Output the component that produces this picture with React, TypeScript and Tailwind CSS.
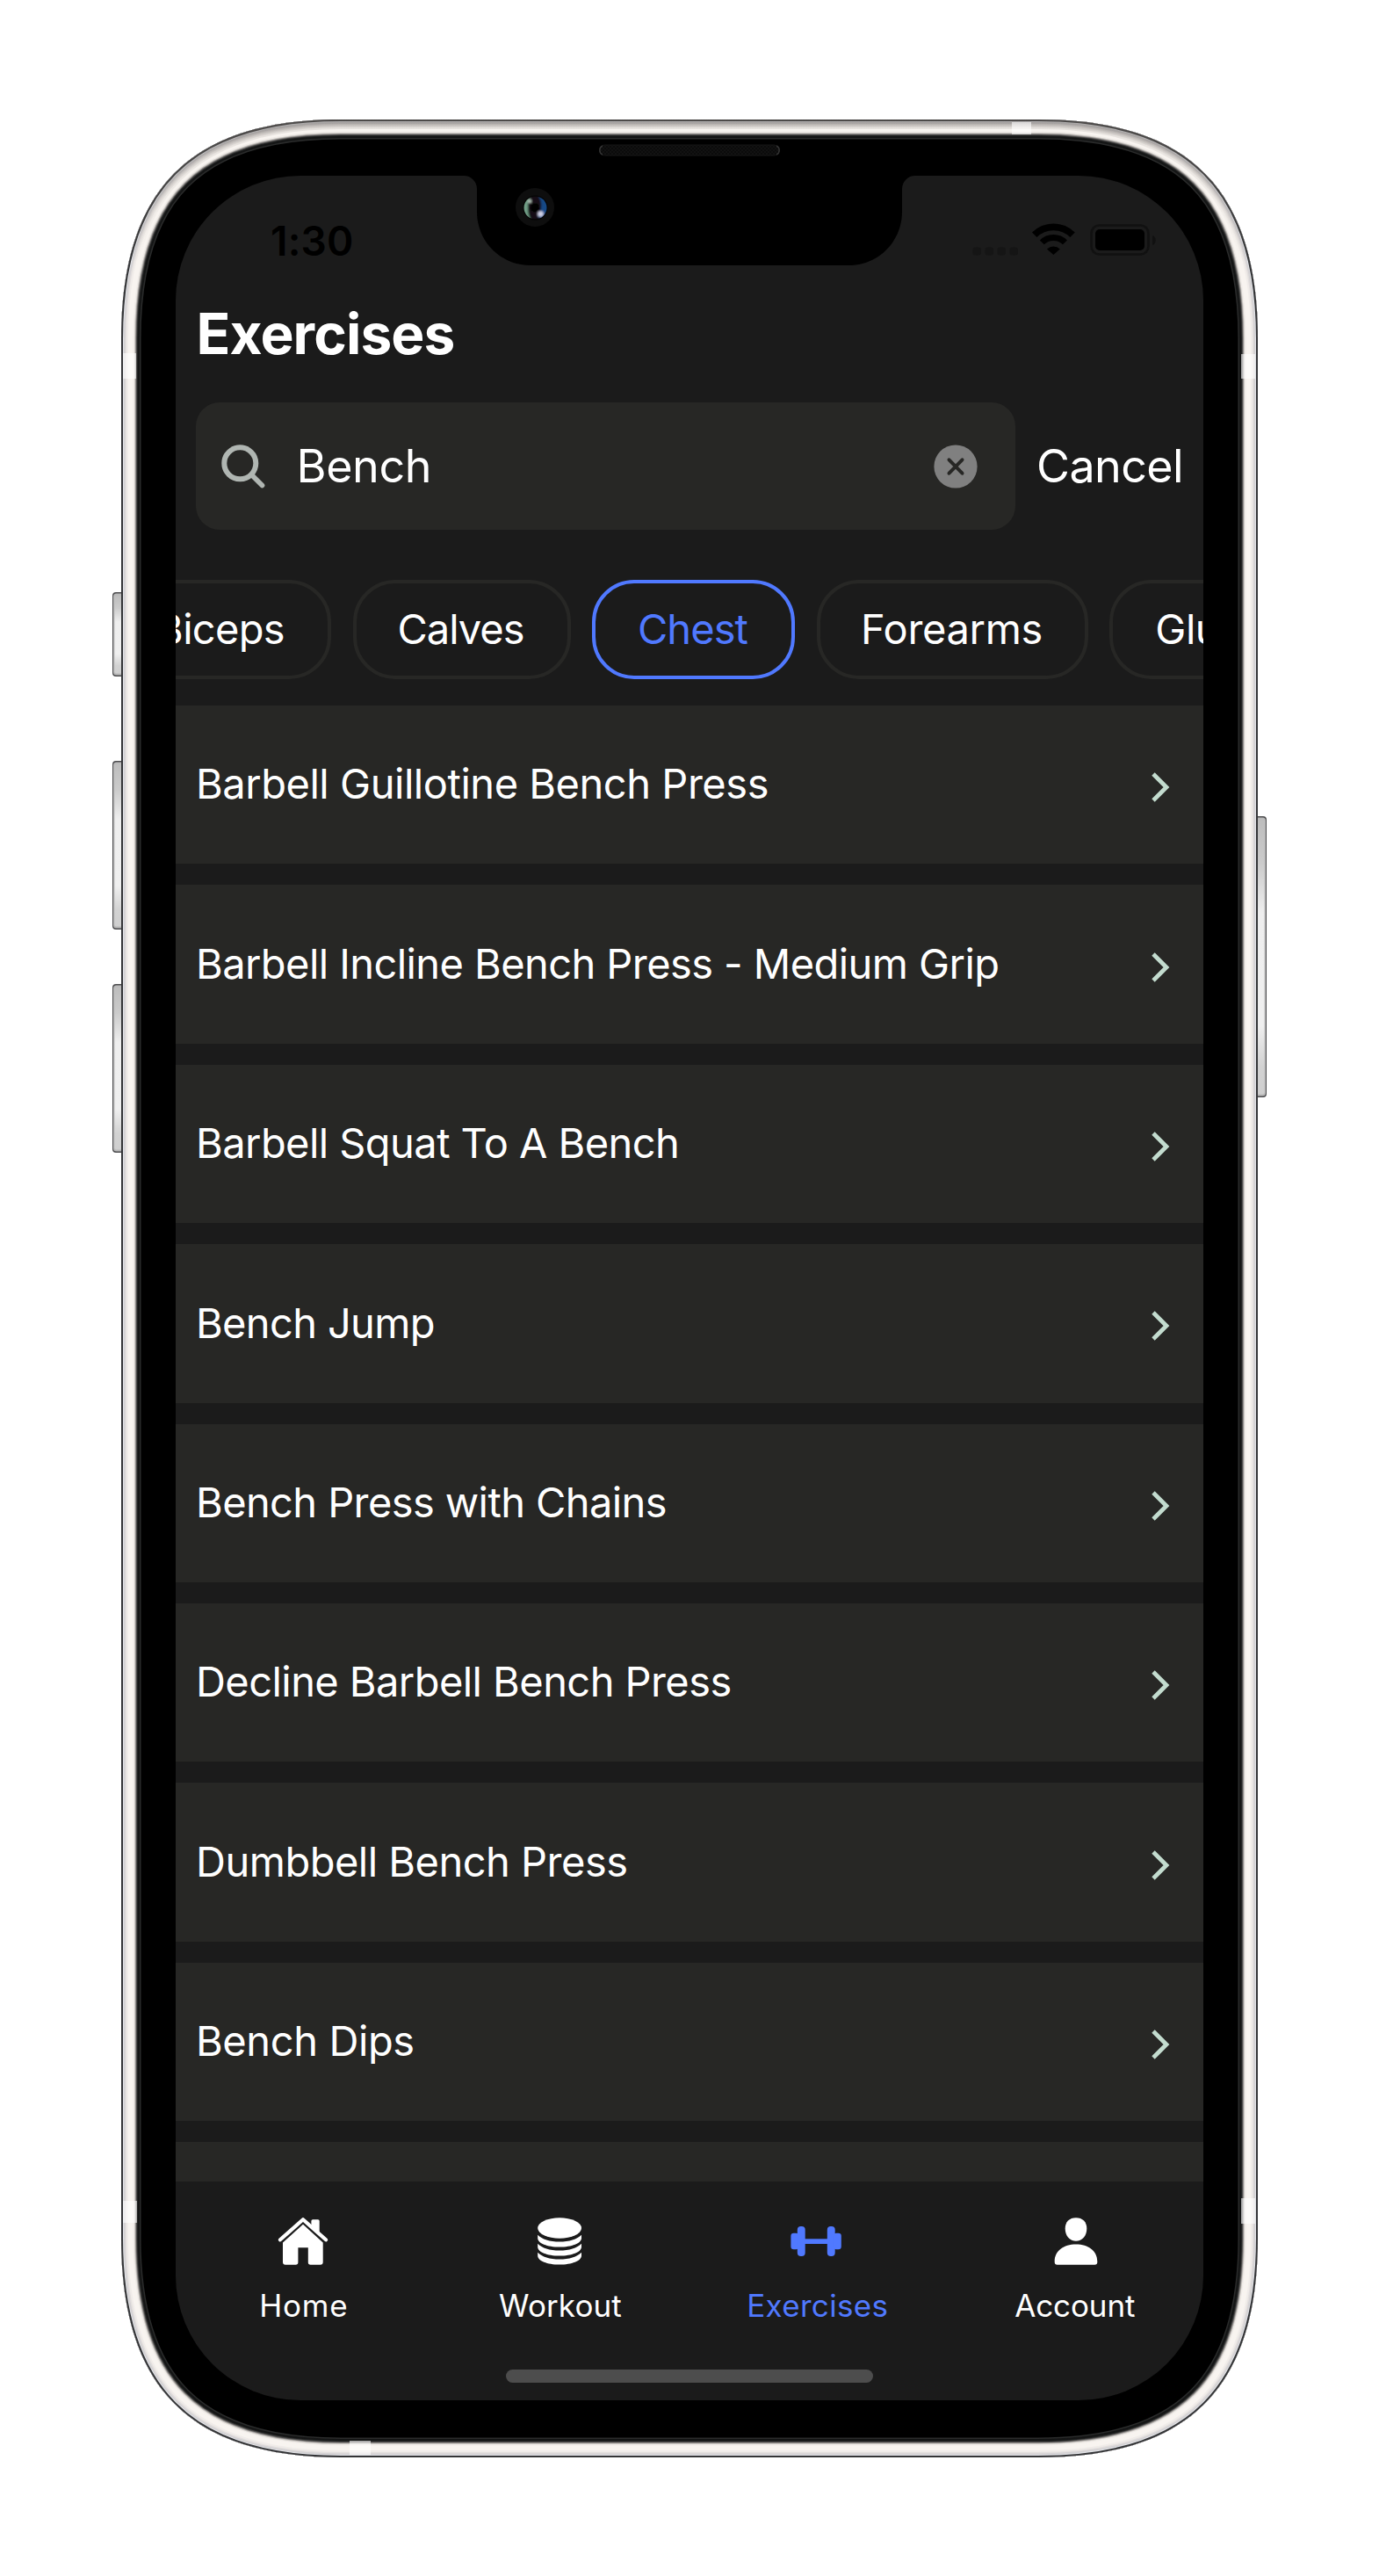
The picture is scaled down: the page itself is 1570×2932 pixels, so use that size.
import React from "react";

const BODY =
  "M388 136H1182C1353 136 1432 215 1432 386V2547C1432 2718 1353 2797 1182 2797H388C217 2797 138 2718 138 2547V386C138 215 217 136 388 136Z";

/* [depth from the outer edge, colour], deepest first */
const RIM: [number, string][] = [
  [22.5, "#2a2b2b"],
  [21, "#141515"],
  [19, "#222323"],
  [18, "#4e4d4c"],
  [17, "#8f8c8a"],
  [16, "#cbc7c3"],
  [15, "#f0ece8"],
  [13.5, "#f8f4f0"],
  [8, "#f0ece9"],
  [6, "#e3dfde"],
  [4.5, "#d3d1d3"],
  [3, "#e3e4e8"],
  [2, "#343537"],
];

/* extra shade on the upper part of the rim */
const SHADE = [11, 9, 7, 5];

function SideButton({ x, y, h, right }: { x: number; y: number; h: number; right?: boolean }) {
  return (
    <g>
      <rect x={right ? x - 8 : x} y={y} width="18" height={h} rx="4" fill="#4c4c4e" />
      <rect x={right ? x - 8 : x + 1} y={y + 1.5} width="17" height={h - 3} rx="3.5" fill="#b9b9b9" />
      <rect x={right ? x - 8 : x + 2.5} y={y + 3.5} width="15.5" height={h - 7} rx="2" fill="url(#btn)" />
    </g>
  );
}

function DeviceFrame() {
  return (
    <svg className="absolute inset-0" width="1570" height="2932" viewBox="0 0 1570 2932">
      <defs>
        <clipPath id="bodyClip">
          <path d={BODY} />
        </clipPath>
        <linearGradient id="btn" x1="0" y1="0" x2="0" y2="1">
          <stop offset="0" stopColor="#bdbdbd" />
          <stop offset="0.16" stopColor="#cbcbcb" />
          <stop offset="0.34" stopColor="#eeeeee" />
          <stop offset="0.75" stopColor="#efefef" />
          <stop offset="0.9" stopColor="#d2d2d2" />
          <stop offset="1" stopColor="#cfcfcf" />
        </linearGradient>
        <linearGradient id="shade" gradientUnits="userSpaceOnUse" x1="0" y1="136" x2="0" y2="300">
          <stop offset="0" stopColor="#6b6560" stopOpacity="0.14" />
          <stop offset="1" stopColor="#6b6560" stopOpacity="0" />
        </linearGradient>
      </defs>
      <SideButton x={128} y={674} h={96} />
      <SideButton x={128} y={866} h={192} />
      <SideButton x={128} y={1120} h={192} />
      <SideButton x={1432} y={929} h={320} right />
      <g clipPath="url(#bodyClip)">
        <path d={BODY} fill="#000" />
        {RIM.map(([d, c]) => (
          <path key={d} d={BODY} fill="none" stroke={c} strokeWidth={d * 2} />
        ))}
        {SHADE.map((d) => (
          <path key={d} d={BODY} fill="none" stroke="url(#shade)" strokeWidth={d * 2} />
        ))}
        <g fill="#fff" fillOpacity="0.6">
          <rect x="1152" y="139" width="22" height="14" />
          <rect x="140" y="402" width="15" height="29" />
          <rect x="1413" y="403" width="16" height="28" />
          <rect x="398" y="2778" width="24" height="16" />
          <rect x="140" y="2505" width="16" height="25" />
          <rect x="1413" y="2502" width="16" height="29" />
        </g>
      </g>
    </svg>
  );
}

function Notch() {
  return (
    <svg className="absolute left-[500px] top-[158px]" width="570" height="150" viewBox="500 158 570 150">
      <defs>
        <pattern id="mesh" width="4" height="4" patternUnits="userSpaceOnUse">
          <rect width="4" height="4" fill="#121212" />
          <rect width="2" height="2" fill="#0b0b0b" />
          <rect x="2" y="2" width="2" height="2" fill="#0b0b0b" />
        </pattern>
        <clipPath id="lens">
          <ellipse cx="609.5" cy="236.5" rx="13" ry="13" />
        </clipPath>
        <filter id="soft">
          <feGaussianBlur stdDeviation="1" />
        </filter>
      </defs>
      <path d="M528 199V200A15 15 0 0 1 543 215V241C543 275 570 302 604 302H966C1000 302 1027 275 1027 241V215A15 15 0 0 1 1042 200V199Z" fill="#000" />
      <rect x="682.5" y="165" width="204.500" height="12" rx="6" fill="url(#mesh)" stroke="#171717" />
      <path d="M686 166a5.500 5.500 0 0 0 0 10M884 166a5.500 5.500 0 0 1 0 10" fill="none" stroke="#333" strokeWidth="1.5" />
      <circle cx="609" cy="236" r="22" fill="#0e0e0e" />
      <circle cx="609.500" cy="236.500" r="14" fill="#040404" />
      <g clipPath="url(#lens)" filter="url(#soft)">
        <rect x="596" y="223" width="27" height="27" fill="#121012" />
        <path d="M604 222C600 230 600 242 604 250L594 250V222Z" fill="#6f9d85" />
        <path d="M613 223C618 230 617 240 612 246L617 250L625 240V226Z" fill="#174a86" />
        <circle cx="609" cy="236.500" r="5" fill="#050505" />
        <circle cx="603" cy="229" r="2.300" fill="#a9b8af" />
        <circle cx="615.500" cy="243.500" r="3.300" fill="#cfd0e6" />
      </g>
    </svg>
  );
}

function StatusBar() {
  return (
    <div className="flex h-[147px] shrink-0 items-start justify-between pl-[108px] pr-[54px] pt-[54px]">
      <span className="text-[46px] font-semibold leading-[40px] tracking-[0.2px] text-black">1:30</span>
      <svg width="209" height="40" viewBox="0 0 209 40">
        <g fill="#151515">
          <rect x="0.500" y="27.500" width="9.500" height="9" rx="3" />
          <rect x="14.500" y="27.500" width="9.500" height="9" rx="3" />
          <rect x="28.500" y="27.500" width="9.500" height="9" rx="3" />
          <rect x="42.500" y="27.500" width="9.500" height="9" rx="3" />
        </g>
        <g fill="none" stroke="#000">
          <path d="M70.700 13.300A30.700 30.700 0 0 1 114.100 13.300" strokeWidth="7.700" />
          <path d="M79.300 21.900A18.500 18.500 0 0 1 105.500 21.900" strokeWidth="7" />
        </g>
        <path d="M92.400 36L85 29.500A10.500 10.500 0 0 1 99.800 29.500Z" />
        <rect x="135.500" y="2.500" width="65" height="33" rx="9" fill="none" stroke="#111" strokeWidth="2.600" />
        <rect x="140" y="7" width="56" height="24" rx="5" fill="#000" />
        <path d="M205 14C210 15.500 210 23.500 205 25Z" fill="#111" />
      </svg>
    </div>
  );
}

function SearchRow() {
  return (
    <div className="mt-[45px] flex h-[145px] shrink-0 items-center pl-[23px]">
      <div className="flex h-full w-[932.5px] items-center rounded-[27px] bg-[#272725] pl-[29px] pr-[43px]">
        <svg width="50" height="50" viewBox="0 0 50 50" fill="none" stroke="#b0b6b2" strokeLinecap="round">
          <circle cx="21.300" cy="21.300" r="18" strokeWidth="6" />
          <path d="M34.500 34.500L46.500 46.500" strokeWidth="5.600" />
        </svg>
        <span className="ml-[35.5px] flex-1 text-[52px] leading-[60px] tracking-[-0.36px] text-white">Bench</span>
        <svg width="50" height="50" viewBox="0 0 50 50">
          <circle cx="25" cy="25" r="24.600" fill="#808080" />
          <path d="M17.500 17.300L32.500 32.700M32.500 17.300L17.500 32.700" stroke="#272725" strokeWidth="4" strokeLinecap="round" />
        </svg>
      </div>
      <span className="ml-[24.5px] text-[52px] leading-[60px] tracking-[-0.58px] text-white">Cancel</span>
    </div>
  );
}

const muscles = [
  { label: "Biceps", size: "w-[254px] border-[#272725] text-white tracking-[-0.7px] pl-[2px]" },
  { label: "Calves", size: "w-[248px] border-[#272725] text-white tracking-[-1px] pr-[2px]" },
  { label: "Chest", size: "w-[231px] border-[#5079ff] text-[#5079ff] tracking-[-0.9px] pr-[2px]" },
  { label: "Forearms", size: "w-[309px] border-[#272725] text-white tracking-[-0.35px] pr-[1px]" },
  { label: "Glutes", size: "w-[243px] border-[#272725] text-white tracking-[-0.5px]" },
];

function MuscleFilter() {
  return (
    <div className="ml-[-77px] mt-[57px] flex h-[113px] shrink-0 gap-[24.5px]">
      {muscles.map((m) => (
        <div
          key={m.label}
          className={`flex shrink-0 items-center justify-center rounded-[48px] border-4 pb-[2px] text-[47px] leading-[56px] ${m.size}`}
        >
          {m.label}
        </div>
      ))}
    </div>
  );
}

const exercises = [
  { name: "Barbell Guillotine Bench Press", spacing: "tracking-[-0.46px]" },
  { name: "Barbell Incline Bench Press - Medium Grip", spacing: "tracking-[-0.57px]" },
  { name: "Barbell Squat To A Bench", spacing: "tracking-[-0.56px]" },
  { name: "Bench Jump", spacing: "tracking-[-0.65px]" },
  { name: "Bench Press with Chains", spacing: "tracking-[-0.6px]" },
  { name: "Decline Barbell Bench Press", spacing: "tracking-[-0.56px]" },
  { name: "Dumbbell Bench Press", spacing: "tracking-[-0.5px]" },
  { name: "Bench Dips", spacing: "tracking-[-0.4px]" },
];

function ExerciseList() {
  return (
    <div className="mt-[30px] flex h-[1680px] shrink-0 flex-col gap-[24px] overflow-hidden">
      {exercises.map((e) => (
        <div key={e.name} className="flex h-[180.4px] shrink-0 items-center justify-between bg-[#272725] pl-[23px] pr-[38px]">
          <span className={`pb-[1.5px] text-[47px] leading-[56px] text-white ${e.spacing}`}>{e.name}</span>
          <svg className="mt-[6px]" width="22" height="36" viewBox="0 0 22 36" fill="none" stroke="#c3dccf" strokeWidth="4.800">
            <path d="M3 3L18 18L3 33" />
          </svg>
        </div>
      ))}
      <div className="h-[180.4px] shrink-0 bg-[#272725]" />
    </div>
  );
}

function HomeIcon() {
  return (
    <svg width="60" height="56" viewBox="0 0 60 56" fill="currentColor">
      <path d="M3 26.300L29 3.300L55 26.300" fill="none" stroke="currentColor" strokeWidth="4.200" strokeLinecap="round" strokeLinejoin="round" />
      <path d="M38.400 10V5A1.700 1.700 0 0 1 40.100 3.300H46A1.700 1.700 0 0 1 47.700 5V19.500Z" />
      <path d="M29 8.800L51.700 29.500V51.700A3 3 0 0 1 48.700 54.700H37.500A2.700 2.700 0 0 1 34.800 52V35.300H23.400V52A2.700 2.700 0 0 1 20.700 54.700H9A3 3 0 0 1 6 51.700V29.500Z" />
    </svg>
  );
}

function StackIcon() {
  const band = "M3.200 20.700C8 25.700 17 28.600 28 28.600S48 25.700 53 20.700V24.500C53 30.300 42 34.600 28 34.600S3.200 30.300 3.200 24.500Z";
  return (
    <svg width="60" height="56" viewBox="0 0 60 56" fill="currentColor">
      <ellipse cx="28.100" cy="13" rx="24.900" ry="11.700" />
      <path d={band} />
      <path d={band} transform="translate(0 10)" />
      <path d={band} transform="translate(0 20)" />
    </svg>
  );
}

function DumbbellIcon() {
  return (
    <svg width="60" height="56" viewBox="0 0 60 56" fill="currentColor" overflow="visible">
      <rect x="-0.600" y="18.700" width="9" height="18.500" rx="3.300" />
      <rect x="6.800" y="11" width="8.900" height="34" rx="4" />
      <rect x="14" y="25.300" width="29" height="5.700" />
      <rect x="40.800" y="11" width="8.900" height="34" rx="4" />
      <rect x="47.900" y="18.700" width="8.900" height="18.500" rx="3.300" />
    </svg>
  );
}

function PersonIcon() {
  return (
    <svg width="60" height="56" viewBox="0 0 60 56" fill="currentColor">
      <path d="M31 1.200C38.500 1.200 43.300 6 43.300 13.500C43.300 22 38 27.800 31 27.800S18.700 22 18.700 13.500C18.700 6 23.500 1.200 31 1.200Z" />
      <path d="M31 31.600C45 31.600 55.300 39 55.300 51V51.700A3 3 0 0 1 52.300 54.700H9.700A3 3 0 0 1 6.700 51.700V51C6.700 39 17 31.600 31 31.600Z" />
    </svg>
  );
}

const tabs = [
  { label: "Home", Icon: HomeIcon, style: "text-white", spacing: "tracking-[0.78px] pr-[1px]" },
  { label: "Workout", Icon: StackIcon, style: "text-white", spacing: "tracking-[0.13px] pr-[1.5px]" },
  { label: "Exercises", Icon: DumbbellIcon, style: "text-[#5079ff]", spacing: "tracking-[0.31px] pr-[1px]" },
  { label: "Account", Icon: PersonIcon, style: "text-white", spacing: "tracking-[-0.1px]" },
];

function TabBar() {
  return (
    <div className="flex flex-1 flex-col items-center">
      <div className="grid w-full grid-cols-4 pt-[40px]">
        {tabs.map(({ label, Icon, style, spacing }) => (
          <div key={label} className={`flex flex-col items-center gap-[24px] ${style}`}>
            <Icon />
            <span className={`text-[35px] leading-[42px] ${spacing}`}>{label}</span>
          </div>
        ))}
      </div>
      <div className="mt-[52px] h-[15px] w-[418px] rounded-full bg-[#4d4d4d]" />
    </div>
  );
}

export default function App() {
  return (
    <div className="relative h-[2932px] w-[1570px] overflow-hidden bg-white pl-[200px] pt-[200px] font-['Inter',sans-serif]">
      <DeviceFrame />
      <div className="relative flex h-[2532px] w-[1170px] flex-col overflow-hidden rounded-[142px] bg-[#1b1b1b]">
        <StatusBar />
        <h1 className="shrink-0 pl-[23.5px] text-[64px] font-bold leading-[66px] tracking-[-0.91px] text-white">Exercises</h1>
        <SearchRow />
        <MuscleFilter />
        <ExerciseList />
        <TabBar />
      </div>
      <Notch />
    </div>
  );
}
